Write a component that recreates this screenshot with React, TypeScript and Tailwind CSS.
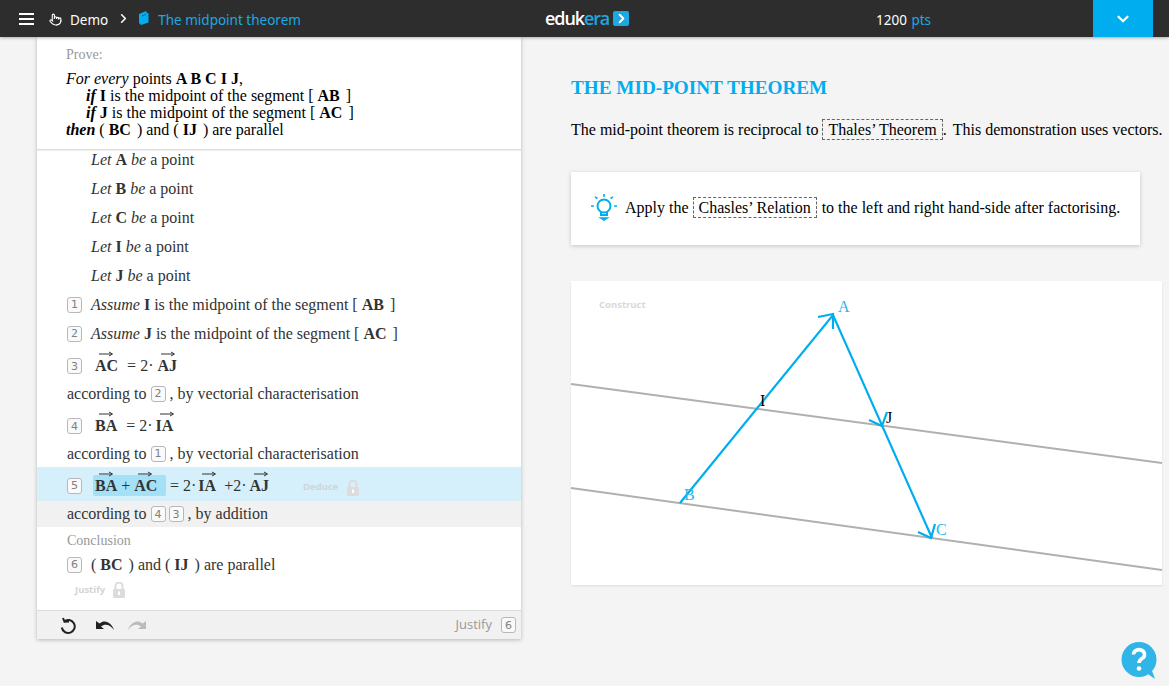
import React from "react";
import { ChevronDown, ChevronRight, Pointer } from "lucide-react";

function Vec({ children, className = "" }: { children: React.ReactNode; className?: string }) {
  return (
    <span className={`relative inline-block font-bold ${className}`}>
      {children}
      <svg className="absolute left-[4px] top-[-3px] w-[14px] h-[6px]" viewBox="0 0 14 6" fill="none">
        <path d="M0 3H13M10 1l3.500 2L10 5" stroke="#333" strokeWidth="1" />
      </svg>
    </span>
  );
}

function Num({ n }: { n: number }) {
  return (
    <span className="inline-flex items-center justify-center w-[15px] h-[16px] border border-[#b8b8b8] rounded-[3px] bg-[#fafafa] text-[#808080] text-[11px] leading-none font-['DejaVu_Sans',sans-serif]">
      {n}
    </span>
  );
}

function Lock() {
  return (
    <svg width="12" height="16" viewBox="0 0 12 16" fill="#dcdcdc">
      <path d="M1 7h10a1 1 0 0 1 1 1v7a1 1 0 0 1-1 1H1a1 1 0 0 1-1-1V8a1 1 0 0 1 1-1z" />
      <path d="M2.500 7V4a3.500 3.500 0 0 1 7 0v3" fill="none" stroke="#dcdcdc" strokeWidth="2" />
      <rect x="5" y="9.500" width="2" height="3.500" fill="#fff" />
    </svg>
  );
}

function LetRow({ p }: { p: string }) {
  return (
    <div className="h-[29px] pl-[54px] flex items-center text-[#333]">
      <span><i>Let</i> <b>{p}</b> <i>be</i> a point</span>
    </div>
  );
}

function Dashed({ children }: { children: React.ReactNode }) {
  return <span className="border border-dashed border-[#666] px-[5px] py-[1px]">{children}</span>;
}

function Seg({ name, open, close }: { name: string; open: string; close: string }) {
  return (
    <>
      {open} <b>{name}</b><span className="ml-[6px]">{close}</span>
    </>
  );
}

function Diagram() {
  return (
    <svg className="w-full h-full" viewBox="0 0 591 304" fill="none">
      <path d="M0 103L591 182M0 207L591 289" stroke="#b0b0b0" strokeWidth="2" />
      <g stroke="#00aeef" strokeWidth="2.200">
        <path d="M109 222L262 34L361 257" />
        <path d="M247 36L262 33L262 48" />
        <path d="M298 139L311 145L316 131" />
        <path d="M347 251L360 257L364 243" />
      </g>
    </svg>
  );
}

export default function App() {
  return (
    <div className="relative h-[686px] w-[1169px] overflow-hidden bg-[#f4f4f4] font-['Liberation_Serif',serif] text-[16px]">
      <header className="relative z-20 h-[37px] bg-[#2d2d2d] flex items-center font-['Noto_Sans',sans-serif] text-[13.500px] shadow-[0_1px_3px_rgba(0,0,0,0.3)]">
        <div className="w-[500px] flex items-center">
          <div className="ml-[19px] w-[15px] flex flex-col gap-[3px]">
            <span className="h-[2px] bg-white" />
            <span className="h-[2px] bg-white" />
            <span className="h-[2px] bg-white" />
          </div>
          <Pointer className="ml-[15px] mt-[1px] text-white" size={13} strokeWidth={2} />
          <span className="ml-[8px] mt-[3px] text-white">Demo</span>
          <ChevronRight className="ml-[8px] mb-[1px] text-white" size={15} strokeWidth={2.500} />
          <svg className="ml-[8px] mb-[1px]" width="10" height="14" viewBox="0 0 10 14">
            <path d="M0 3l7-3 1 2 1.500 0v9.500l-7.500 2.500-2-2z" fill="#00aeef" />
            <path d="M3 5l4-1.500" stroke="#0a5f85" strokeWidth="1" />
          </svg>
          <span className="ml-[9px] mt-[3px] text-[#1ca8e3]">The midpoint theorem</span>
        </div>
        <div className="w-[300px] flex items-center font-['Open_Sans',sans-serif] ml-[45px] mb-[1px]">
          <span className="text-white text-[18px] font-semibold tracking-[-1.100px] leading-none">eduk<span className="text-[#1ca8e3]">era</span></span>
          <span className="ml-[4px] w-[16px] h-[15px] bg-[#1ca8e3] rounded-[2px] flex items-center justify-center">
            <ChevronRight className="text-white" size={15} strokeWidth={3} />
          </span>
        </div>
        <div className="ml-[31px] mt-[3px] w-[217px] text-white">
          1200 <span className="ml-[1px] text-[#1ca8e3]">pts</span>
        </div>
        <div className="w-[60px] h-[37px] bg-[#00aeef] flex items-center justify-center">
          <ChevronDown className="text-white" size={18} strokeWidth={3} />
        </div>
      </header>

      <div className="flex items-start">
        <section className="ml-[37px] w-[484px] h-[602px] bg-white shadow-[0_1px_4px_rgba(0,0,0,0.25)] flex flex-col text-[#333]">
          <div className="relative z-10 h-[113px] bg-white border-b border-[#ddd] pl-[29px] shadow-[0_1px_1px_rgba(0,0,0,0.06)] text-black leading-[17px]">
            <div className="pt-[9px] h-[31px] text-[14px] text-[#999]">Prove:</div>
            <div className="mt-[2px]"><i>For every</i> points <b>A B C I J</b>,</div>
            <div className="pl-[20px]"><b><i>if</i> I</b> is the midpoint of the segment <Seg open="[" name="AB" close="]" /></div>
            <div className="pl-[20px]"><b><i>if</i> J</b> is the midpoint of the segment <Seg open="[" name="AC" close="]" /></div>
            <div><b><i>then</i></b> <Seg open="(" name="BC" close=")" /> and <Seg open="(" name="IJ" close=")" /> are parallel</div>
          </div>
          <div className="mt-[-5px] flex-1">
            <LetRow p="A" />
            <LetRow p="B" />
            <LetRow p="C" />
            <LetRow p="I" />
            <LetRow p="J" />
            <div className="h-[29px] pl-[30px] flex items-center gap-[9px]">
              <Num n={1} />
              <span><i>Assume</i> <b>I</b> is the midpoint of the segment <Seg open="[" name="AB" close="]" /></span>
            </div>
            <div className="h-[29px] pl-[30px] flex items-center gap-[9px]">
              <Num n={2} />
              <span><i>Assume</i> <b>J</b> is the midpoint of the segment <Seg open="[" name="AC" close="]" /></span>
            </div>
            <div className="h-[33px] pl-[30px] flex items-center gap-[13px] pt-[3px]">
              <Num n={3} />
              <span className="whitespace-pre"><Vec>AC</Vec><span className="ml-[1px]">  = 2·</span><Vec className="ml-[4px]">AJ</Vec></span>
            </div>
            <div className="h-[27px] pb-[2px] pl-[30px] flex items-center gap-[4px]">
              according to <Num n={2} /> , by vectorial characterisation
            </div>
            <div className="h-[33px] pl-[30px] flex items-center gap-[13px] pt-[3px]">
              <Num n={4} />
              <span className="whitespace-pre"><Vec>BA</Vec><span className="ml-[1px]">  = 2·</span><Vec className="ml-[3px]">IA</Vec></span>
            </div>
            <div className="h-[26px] pb-[1px] pl-[30px] flex items-center gap-[4px]">
              according to <Num n={1} /> , by vectorial characterisation
            </div>
            <div className="h-[34px] bg-[#d5f0fb] pl-[30px] pt-[3px] flex items-center">
              <Num n={5} />
              <span className="ml-[11px] bg-[#a4e0f6] rounded-[2px] h-[21px] w-[73px] pl-[2px] flex items-center whitespace-pre"><Vec>BA</Vec> + <Vec>AC</Vec></span>
              <span className="ml-[4px] whitespace-pre">= 2·<Vec className="ml-[2px]">IA</Vec>  +2·<Vec className="ml-[3px]">AJ</Vec></span>
              <span className="ml-[34px] mt-[4px] flex items-center gap-[9px] font-['Open_Sans',sans-serif] font-bold text-[9.500px] text-[#d0d5d8]">Deduce <Lock /></span>
            </div>
            <div className="h-[26px] bg-[#f1f1f1] pl-[30px] flex items-center gap-[4px]">
              according to <span className="flex gap-[3px]"><Num n={4} /><Num n={3} /></span> , by addition
            </div>
            <div className="h-[26px] pl-[30px] flex items-center text-[14px] text-[#999]">Conclusion</div>
            <div className="h-[23px] pl-[30px] flex items-center gap-[9px]">
              <Num n={6} />
              <span><Seg open="(" name="BC" close=")" /> and <Seg open="(" name="IJ" close=")" /> are parallel</span>
            </div>
            <div className="h-[28px] pl-[38px] flex items-center gap-[8px] font-['Open_Sans',sans-serif] font-bold text-[9.500px] text-[#d4d4d4]">
              Justify <Lock />
            </div>
          </div>
          <div className="h-[29px] bg-[#f1f1f1] border-t border-[#ddd] flex items-center pl-[23px] font-['Open_Sans',sans-serif]">
            <svg width="17" height="17" viewBox="0 0 17 17" fill="none" stroke="#222" strokeWidth="2">
              <path d="M4 4.500a6.500 6.500 0 1 1-2.200 6" />
              <path d="M3 1l1.500 3.800L9 4.500" />
            </svg>
            <svg className="ml-[19px]" width="19" height="11" viewBox="0 0 19 11" fill="#222">
              <path d="M0 1v8h8L5 6.500C9 3.500 14 4.500 18 10 16 3 9-1.500 3.500 3.500z" />
            </svg>
            <svg className="ml-[12px]" width="19" height="11" viewBox="0 0 19 11" fill="#bbb">
              <path d="M19 1v8h-8l3-2.500C10 3.500 5 4.500 1 10 3 3 10-1.500 15.500 3.500z" />
            </svg>
            <div className="ml-auto mr-[5px] flex items-center gap-[9px] text-[13px] text-[#999]">
              Justify <Num n={6} />
            </div>
          </div>
        </section>

        <main className="ml-[50px] w-[591px] shrink-0 text-black">
          <h1 className="mt-[39px] text-[19.200px] leading-[24px] font-bold text-[#00aeef]">THE MID-POINT THEOREM</h1>
          <p className="mt-[20px] leading-[20px] whitespace-nowrap">
            The mid-point theorem is reciprocal to <Dashed>Thales’ Theorem</Dashed>. <span className="ml-[2px]">This demonstration uses vectors.</span>
          </p>
          <div className="mt-[32px] h-[73px] w-[569px] bg-white shadow-[0_1px_4px_rgba(0,0,0,0.2)] flex items-center pl-[20px] pb-[2px]">
            <svg width="26" height="30" viewBox="0 0 26 30" fill="none" stroke="#00aeef" strokeWidth="1.600">
              <circle cx="13" cy="13" r="6.500" strokeWidth="2" />
              <path d="M10 19v3h6v-3" strokeWidth="2" />
              <path d="M13 1v3M4 4l2.500 1.500M22 4l-2.500 1.500M0 13h3M23 13h3" />
              <path d="M10 25h6l-3 2z" fill="#00aeef" />
            </svg>
            <span className="ml-[8px] whitespace-nowrap">Apply the <Dashed>Chasles’ Relation</Dashed> <span className="ml-[1px]">to the left and right hand-side after factorising.</span></span>
          </div>
          <div className="relative mt-[36px] h-[304px] bg-white shadow-[0_1px_2px_rgba(0,0,0,0.1)]">
            <Diagram />
            <span className="absolute left-[28px] top-[17px] font-['Open_Sans',sans-serif] font-bold text-[9.500px] text-[#d8d8d8]">Construct</span>
            <span className="absolute left-[267px] top-[14px] text-[#29b6ea]">A</span>
            <span className="absolute left-[113px] top-[202px] text-[#29b6ea]">B</span>
            <span className="absolute left-[365px] top-[237px] text-[#29b6ea]">C</span>
            <span className="absolute left-[189px] top-[108px]">I</span>
            <span className="absolute left-[315px] top-[125px]">J</span>
          </div>
        </main>
      </div>

      <svg className="absolute left-[1121px] top-[642px]" width="37" height="38" viewBox="0 0 37 38">
        <path d="M24 30L34 37L30 26z" fill="#2fb5e8" />
        <circle cx="18" cy="17.500" r="17.500" fill="#2fb5e8" />
        <path d="M12.500 12.500a5.500 4.800 0 1 1 8.500 4c-2 1.300-3 2.200-3 4.500" fill="none" stroke="#fff" strokeWidth="3.600" />
        <circle cx="18" cy="26.500" r="2.300" fill="#fff" />
      </svg>
    </div>
  );
}
